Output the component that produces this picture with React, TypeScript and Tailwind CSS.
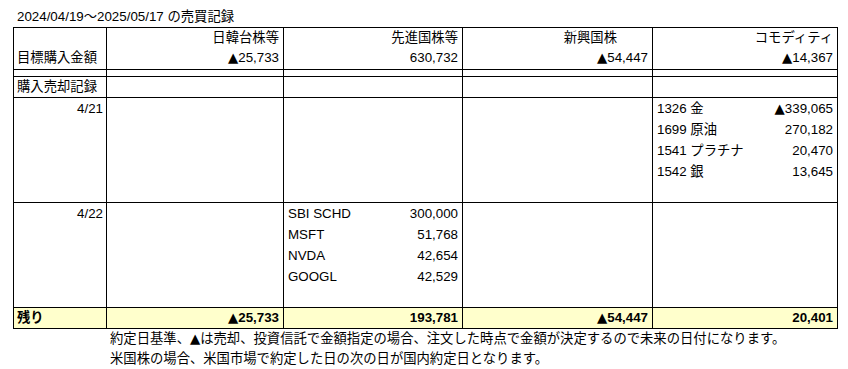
import React from "react";

const Tri = () => (
  <span className="font-['DejaVu_Sans',sans-serif]">▲</span>
);

const W = ["w-[93px]", "w-[177px]", "w-[179px]", "w-[190px]", "w-[185px]"];

function Item({ name, value, neg }: { name: string; value: string; neg?: boolean }) {
  return (
    <div className="flex justify-between h-[21px] leading-[21px]">
      <span>{name}</span>
      <span>
        {neg && <Tri />}
        {value}
      </span>
    </div>
  );
}

export default function App() {
  return (
    <div className="w-[848px] h-[369px] bg-white text-black text-[13.33px] font-['Liberation_Sans','Noto_Sans_CJK_JP',sans-serif] overflow-hidden">
      <div className="h-[27px] pt-[7px] pl-[17px] leading-[20px]">
        2024/04/19～2025/05/17 の売買記録
      </div>
      <div className="ml-[13px] w-[825px] border-l border-t border-black">
        {/* header */}
        <div className="flex h-[42px] border-b border-black leading-[20px]">
          <div className={`${W[0]} border-r border-black pl-[3px] pt-[20px]`}>目標購入金額</div>
          <div className={`${W[1]} border-r border-black text-right pr-[4px]`}>
            <div>日韓台株等</div>
            <div><Tri />25,733</div>
          </div>
          <div className={`${W[2]} border-r border-black text-right pr-[4px]`}>
            <div>先進国株等</div>
            <div>630,732</div>
          </div>
          <div className={`${W[3]} border-r border-black text-right pr-[4px]`}>
            <div className="pr-[31px]">新興国株</div>
            <div><Tri />54,447</div>
          </div>
          <div className={`${W[4]} border-r border-black text-right pr-[4px]`}>
            <div>コモディティ</div>
            <div><Tri />14,367</div>
          </div>
        </div>
        {/* spacer */}
        <div className="flex h-[7px] border-b border-black">
          {W.map((w, i) => (
            <div key={i} className={`${w} border-r border-black`} />
          ))}
        </div>
        {/* 購入売却記録 */}
        <div className="flex h-[21px] border-b border-black leading-[20px]">
          <div className={`${W[0]} border-r border-black pl-[3px]`}>購入売却記録</div>
          <div className={`${W[1]} border-r border-black`} />
          <div className={`${W[2]} border-r border-black`} />
          <div className={`${W[3]} border-r border-black`} />
          <div className={`${W[4]} border-r border-black`} />
        </div>
        {/* 4/21 */}
        <div className="flex h-[105px] border-b border-black leading-[21px]">
          <div className={`${W[0]} border-r border-black text-right pr-[3px]`}>4/21</div>
          <div className={`${W[1]} border-r border-black`} />
          <div className={`${W[2]} border-r border-black`} />
          <div className={`${W[3]} border-r border-black`} />
          <div className={`${W[4]} border-r border-black pl-[4px] pr-[4px]`}>
            <Item name="1326 金" value="339,065" neg />
            <Item name="1699 原油" value="270,182" />
            <Item name="1541 プラチナ" value="20,470" />
            <Item name="1542 銀" value="13,645" />
          </div>
        </div>
        {/* 4/22 */}
        <div className="flex h-[105px] border-b border-black leading-[21px]">
          <div className={`${W[0]} border-r border-black text-right pr-[3px]`}>4/22</div>
          <div className={`${W[1]} border-r border-black`} />
          <div className={`${W[2]} border-r border-black pl-[4px] pr-[4px]`}>
            <Item name="SBI SCHD" value="300,000" />
            <Item name="MSFT" value="51,768" />
            <Item name="NVDA" value="42,654" />
            <Item name="GOOGL" value="42,529" />
          </div>
          <div className={`${W[3]} border-r border-black`} />
          <div className={`${W[4]} border-r border-black`} />
        </div>
        {/* 残り */}
        <div className="flex h-[21px] border-b border-black leading-[20px] font-bold bg-[#ffffcc]">
          <div className={`${W[0]} border-r border-black pl-[3px]`}>残り</div>
          <div className={`${W[1]} border-r border-black text-right pr-[4px]`}><Tri />25,733</div>
          <div className={`${W[2]} border-r border-black text-right pr-[4px]`}>193,781</div>
          <div className={`${W[3]} border-r border-black text-right pr-[4px]`}><Tri />54,447</div>
          <div className={`${W[4]} border-r border-black text-right pr-[4px]`}>20,401</div>
        </div>
      </div>
      <div className="pl-[110px] leading-[20px]">
        <div>約定日基準、<Tri />は売却、投資信託で金額指定の場合、注文した時点で金額が決定するので未来の日付になります。</div>
        <div>米国株の場合、米国市場で約定した日の次の日が国内約定日となります。</div>
      </div>
    </div>
  );
}
